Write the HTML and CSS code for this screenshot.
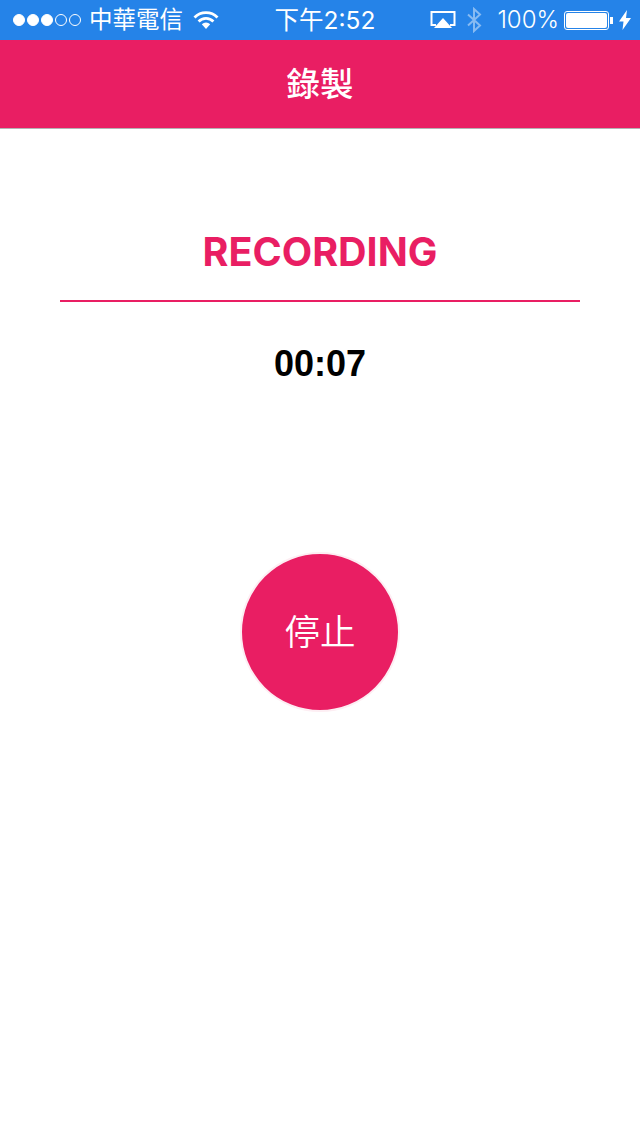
FILE: index.html
```html
<!DOCTYPE html>
<html lang="zh-Hant">
<head>
    <meta charset="UTF-8">
    <meta name="viewport" content="width=device-width, initial-scale=1.0">
    <title>錄製</title>
    <link rel="stylesheet" href="styles.css">
</head>
<body>
    <div class="statusBar">
        <div class="statusLeft">
            <div class="signal">
                <span class="dot on"></span>
                <span class="dot on"></span>
                <span class="dot on"></span>
                <span class="dot"></span>
                <span class="dot"></span>
            </div>
            <span class="carrier">中華電信</span>
            <svg class="wifi" width="26" height="20" viewBox="0 0 26 20">
                <path d="M1.500 7.500a16 16 0 0 1 23 0" fill="none" stroke="#fff" stroke-width="2.800"/>
                <path d="M5.600 11.500a10.400 10.400 0 0 1 14.800 0" fill="none" stroke="#fff" stroke-width="2.800"/>
                <path d="M8.800 14.200a6 6 0 0 1 8.400 0L13 19z" fill="#fff"/>
            </svg>
        </div>
        <div class="statusTime">下午2:52</div>
        <div class="statusRight">
            <svg class="airplay" width="26" height="20" viewBox="0 0 26 20">
                <path d="M6 15H1.500V2h23v13H20" fill="none" stroke="#fff" stroke-width="2"/>
                <path d="M13 8l9 10H4z" fill="#fff"/>
            </svg>
            <svg class="bluetooth" width="16" height="26" viewBox="0 0 16 26">
                <path d="M2 7.500l12 11L8 24V2l6 5.500L2 18.500" fill="none" stroke="#fff" stroke-width="2"/>
            </svg>
            <span class="percent">100%</span>
            <div class="battery"><div class="batteryFill"></div></div>
            <div class="batteryTip"></div>
            <svg class="bolt" width="12" height="20" viewBox="0 0 12 20">
                <path d="M8 0L0 11.500h4.500L3.500 20 12 8H7z" fill="#fff"/>
            </svg>
        </div>
    </div>
    <header class="navBar">錄製</header>
    <main class="content">
        <h1 class="recTitle">RECORDING</h1>
        <hr class="recLine">
        <p class="recTime">00:07</p>
        <button class="stopBtn" type="button">停止</button>
    </main>
</body>
</html>
```

FILE: styles.css
```css
body{margin: 0; background-color: #fff; font-family: Inter, "Noto Sans CJK TC", sans-serif;}
.statusBar{display: flex; justify-content: space-between; align-items: center; height: 40px; background-color: #2583e8; color: #fff; position: relative; padding: 0 9px 0 13px; box-sizing: border-box;}
.statusLeft{display: flex; align-items: center;}
.signal{display: flex; gap: 2px;}
.dot{width: 12px; height: 12px; border: 1px solid #fff; border-radius: 50%; box-sizing: border-box;}
.dot.on{background-color: #fff;}
.carrier{font-size: 23.5px; font-weight: 400; margin-left: 8px; line-height: 40px;}
.wifi{margin-left: 10px;}
.statusTime{position: absolute; left: 10px; right: 0; text-align: center; font-size: 24.5px; font-weight: 400; line-height: 40px;}
.statusRight{display: flex; align-items: center; position: relative;}
.bluetooth{margin-left: 10px; opacity: 0.45;}
.percent{font-size: 24px; font-weight: 300; margin-left: 15px; line-height: 40px;}
.battery{width: 45px; height: 19px; border: 1px solid #fff; border-radius: 3px; padding: 1px; box-sizing: border-box; margin-left: 5px;}
.batteryFill{height: 100%; background-color: #fff; border-radius: 2px;}
.batteryTip{width: 3px; height: 7px; background-color: #fff; margin-left: 1px;}
.bolt{margin-left: 6px;}
.navBar{height: 89px; box-sizing: border-box; border-bottom: 1px solid #b3b3b3; background-color: #e91e63; color: #fff; font-size: 33.5px; font-weight: 500; text-align: center; line-height: 88px;}
.content{display: flex; flex-direction: column; align-items: center;}
.recTitle{margin: 99px 0 0; font-size: 39.5px; line-height: 48px; font-weight: 700; color: #e91e63;}
.recLine{width: 520px; height: 2px; margin: 24px 0 0; border: 0; background-color: #e91e63;}
.recTime{margin: 39px 0 0; font-size: 36px; line-height: 46px; font-weight: 700; font-family: "Liberation Sans", sans-serif; color: #000;}
.stopBtn{width: 160px; height: 160px; margin-top: 165px; border: 2px solid #fdeef3; border-radius: 50%; background-color: #e91e63; color: #fff; font-family: inherit; font-size: 35.5px; font-weight: 350; padding: 0 0 6px;}
```
